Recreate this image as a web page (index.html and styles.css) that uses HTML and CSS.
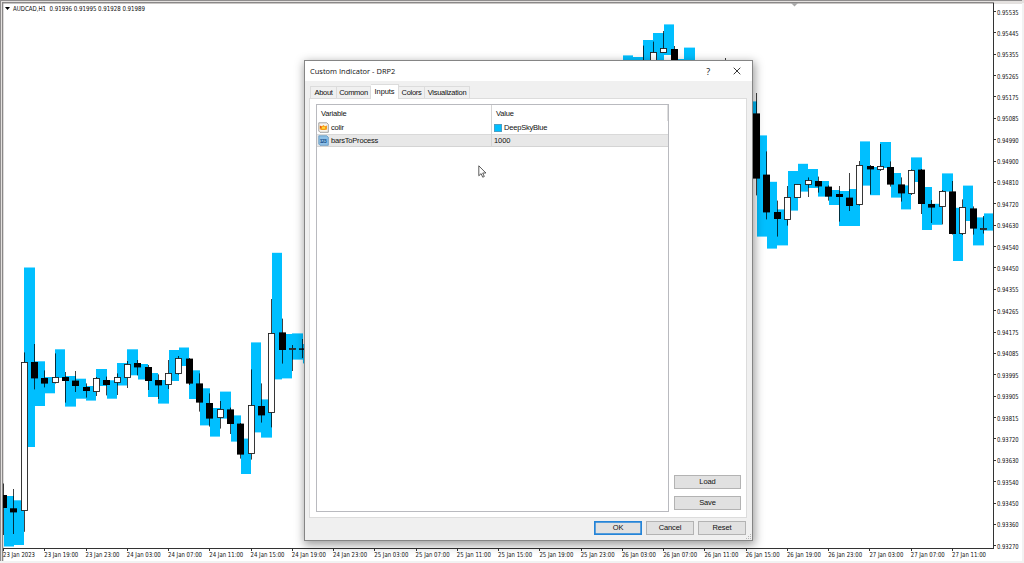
FILE: index.html
```html
<!DOCTYPE html>
<html lang="en">
<head>
<meta charset="utf-8">
<title>AUDCAD,H1</title>
<link rel="stylesheet" href="styles.css">
</head>
<body>
<main class="terminal">
  <svg class="chart" id="chart" width="1024" height="563" viewBox="0 0 1024 563">
    <g class="frame">
      <rect class="edge-light" x="0" y="0" width="1024" height="4"/>
      <rect class="edge-light" x="0" y="0" width="3" height="563"/>
      <rect class="edge-dark" x="0" y="0" width="1022" height="1"/>
      <rect class="edge-dark" x="0" y="0" width="1" height="561"/>
      <rect class="edge-mid" x="2" y="2" width="992" height="1.3"/>
      <rect class="edge-mid" x="2" y="2" width="1.3" height="559"/>
      <rect class="edge-pale" x="1022" y="3" width="2" height="560"/>
      <rect class="edge-pale" x="0" y="561" width="1024" height="2"/>
    </g>
    <path class="shift-mark" d="M791 3h7l-3.500 3.500z"/>
    <path class="menu-mark" d="M5 7h5l-2.500 3z"/>
    <text class="axis-text" x="13" y="10.500" textLength="132" lengthAdjust="spacingAndGlyphs" xml:space="preserve">AUDCAD,H1  0.91936 0.91995 0.91928 0.91989</text>
    <g id="bands" class="band"></g>
    <g id="candles"></g>
    <g id="axes">
      <path class="axis-line" d="M993.500 3V548.500M3 548.500H994"/>
    </g>
  </svg>

  <section class="dialog">
    <header class="titlebar">
      <h1 class="title">Custom Indicator - DRP2</h1>
      <span class="help">?</span>
      <svg class="close" width="8" height="8" viewBox="0 0 8 8"><path d="M.7.7l6.600 6.600M7.300.7L.7 7.300"/></svg>
    </header>
    <nav class="tabs">
      <span class="tab tab-about">About</span>
      <span class="tab tab-common">Common</span>
      <span class="tab tab-active">Inputs</span>
      <span class="tab tab-colors">Colors</span>
      <span class="tab tab-visual">Visualization</span>
    </nav>
    <div class="pane">
      <div class="list">
        <div class="row head"><span class="cell name">Variable</span><span class="cell value">Value</span></div>
        <div class="row">
          <span class="cell name">
            <svg class="icon" width="11" height="11" viewBox="0 0 11 11">
              <path d="M.8.8h8l1.500 1.500v8H2L.8 9z" fill="#f7f3ee" stroke="#8b8b8b" stroke-width=".8"/>
              <path d="M1.700 3.500L4 4.300 5.500 3l1.300 1.200L9 3.500v4L7 8H3.500l-1.800-.7z" fill="#f79a18"/>
              <path d="M4 4.800h3v2H4z" fill="#ffd83c"/><path d="M2 4h1.300v2H2z" fill="#e75b16"/>
            </svg>colir</span>
          <span class="cell value"><i class="swatch"></i>DeepSkyBlue</span>
        </div>
        <div class="row selected">
          <span class="cell name">
            <svg class="icon" width="11" height="11" viewBox="0 0 11 11">
              <path d="M.8.8h8l1.500 1.500v8H2L.8 9z" fill="#8fc1e8" stroke="#5e93bd" stroke-width=".8"/>
              <text class="icon-text" x="1.700" y="7.700" textLength="7">123</text>
            </svg>barsToProcess</span>
          <span class="cell value number">1000</span>
        </div>
      </div>
      <div class="side">
        <button class="btn btn-side">Load</button>
        <button class="btn btn-side">Save</button>
      </div>
    </div>
    <footer class="actions">
      <button class="btn btn-default">OK</button>
      <button class="btn">Cancel</button>
      <button class="btn">Reset</button>
    </footer>
    <svg class="grip" width="6" height="6" viewBox="0 0 6 6"><path d="M4 0h1v1H4zM2 2h1v1H2zM4 2h1v1H4zM0 4h1v1H0zM2 4h1v1H2zM4 4h1v1H4z"/></svg>
  </section>
  <svg class="cursor" width="10" height="14" viewBox="0 0 10 14"><path d="M.8.8v10l2.300-2.200 1.600 3.600 1.600-.7-1.600-3.500h3.200z"/></svg>
</main>
<script src="chart.js"></script>
</body>
</html>
```
FILE: styles.css
```css
body { margin: 0; background: #fff; font-family: "Liberation Sans", Arial, sans-serif; }
.terminal { position: relative; width: 1024px; height: 563px; overflow: hidden; }
.chart { display: block; }
.edge-light { fill: #e4e1df; }
.edge-dark { fill: #8f8d8d; }
.edge-mid { fill: #8a8888; }
.edge-pale { fill: #f2f2f2; }
.shift-mark { fill: #a9a9a9; }
.menu-mark { fill: #000; }
.band { fill: #00bfff; }
.up { fill: #fff; stroke: #222; stroke-width: .9; }
.down { fill: #000; }
.wick { stroke: #000; stroke-width: 1; stroke-opacity: .75; }
.axis-line { stroke: #333; stroke-width: 1; fill: none; }
.axis-text { font: 6.8px "DejaVu Sans Condensed", "DejaVu Sans", sans-serif; fill: #111; }

.dialog {
  position: absolute; left: 304px; top: 60px; width: 449px; height: 481px;
  box-sizing: border-box; border: 1px solid #858585; background: #f0f0f0;
  box-shadow: 1px 3px 9px 1px rgba(0, 0, 0, .38);
  display: flex; flex-direction: column;
  font-size: 7.5px; letter-spacing: -.2px; color: #111;
}
.titlebar { height: 20px; background: #fff; display: flex; align-items: center; flex: none; padding: 0 11px 0 5px; }
.title { margin: 0; font: 7.5px "Open Sans", "Noto Sans", sans-serif; letter-spacing: 0; white-space: nowrap; flex: 1; position: relative; top: -.5px; }
.help { font: 9px "Open Sans", sans-serif; margin-right: 23px; }
.close { fill: none; stroke: #222; stroke-width: .9; }
.tabs { display: flex; align-items: flex-end; height: 17px; padding-left: 5px; flex: none; }
.tab {
  box-sizing: border-box; height: 12px; line-height: 12px; text-align: center; white-space: nowrap;
  border: 1px solid #dcdcdc; border-bottom: 0; border-left-width: 0; letter-spacing: -.3px;
}
.tab-about { width: 27px; border-left-width: 1px; }
.tab-common { width: 34px; }
.tab-active { width: 28px; height: 15px; line-height: 13px; background: #fff; margin-bottom: -1px; position: relative; letter-spacing: -.1px; }
.tab-colors { width: 26px; }
.tab-visual { width: 45px; letter-spacing: -.25px; }
.pane { display: flex; box-sizing: border-box; height: 420px; margin: 0 5px 0 4px; background: #fff; border: 1px solid #dcdcdc; padding: 5px 5px 6px 7px; flex: none; }
.list { box-sizing: border-box; width: 353px; border: 1px solid #b9babf; height: 408px; margin-left: -1px; margin-right: 5px; flex: none; }
.row { display: flex; height: 13px; }
.head { height: 16px; }
.cell { display: flex; align-items: center; box-sizing: border-box; white-space: nowrap; }
.name { width: 175px; border-right: 1px solid #d4d4d4; padding-left: 1px; }
.value { flex: 1; padding-left: 2px; }
.number { letter-spacing: -.1px; }
.head .name, .head .value { padding-left: 4px; }
.head .value { border-right: 1px solid #dedede; }
.selected { background: #e8e8e8; box-shadow: inset 0 1px #d9d9d9, inset 0 -1px #d4d4d4; }
.icon { margin-right: 2px; flex: none; }
.icon-text { font: bold 5px "Liberation Sans", sans-serif; letter-spacing: 0; fill: #164e88; }
.swatch { width: 8px; height: 8px; background: #00bfff; border: .5px solid #4a9ec4; box-sizing: border-box; margin-right: 2px; }
.side { display: flex; flex-direction: column; justify-content: flex-end; gap: 7px; flex: 1; padding-bottom: 1px; }
.btn {
  box-sizing: border-box; width: 48px; height: 14px; padding: 0; border: 1px solid #b3b3b3; background: #e1e1e1;
  font: 7.5px "Liberation Sans", Arial, sans-serif; letter-spacing: -.1px; color: #111; line-height: 12px;
}
.btn-side { width: 67px; }
.btn-default { border: 1px solid #2484d8; box-shadow: inset 0 0 0 .7px #2484d8; }
.actions { display: flex; justify-content: flex-end; gap: 4px; padding: 3px 6px 0 0; }
.grip { position: absolute; right: 0; bottom: 0; fill: #b5b5b5; }
.cursor { position: absolute; left: 478px; top: 165px; fill: #fff; stroke: #333; stroke-width: .8; }
```
FILE: chart.js
```js
const NS = "http://www.w3.org/2000/svg";
const X0 = 3.6, STEP = 10.315;
const x = i => X0 + STEP * i;

// [index, top, bottom]: each band runs from its candle's centre to the next one
const bands = [
  [0,496,546.5],[1,500.3,545],[2,267.5,447],[3,361.3,406],[4,377,393.3],[5,349.3,378],[6,376,406.6],
  [7,378.7,398.7],[8,386,400.6],[9,369,386],[10,380.3,398.7],[11,363,385.5],[12,349.3,375.3],[13,364,379.5],
  [14,373,397],[15,380,403.6],[16,350,381],[17,347.5,366],[18,370.3,399],[19,388.3,425.4],[20,408,436.6],
  [21,391.6,418.6],[22,415.4,441.6],[23,438.6,474],[24,342.4,432.4],[25,399.4,437.6],[26,252.8,379.4],
  [27,334,378.4],[28,333.4,359.6],[29,344,363.4],
  [60,55.4,70],[61,57,70],[62,40,70],[63,33,70],[64,24.4,55],[65,59,70],[66,47.6,70],
  [72,101.4,162.4],[73,135.4,236.6],[74,181.8,248.6],[75,209.4,245.4],[76,171,210.6],[77,163.8,191.6],
  [78,169,188],[79,181,196.6],[80,190,205],[81,191,226],[82,189,226],[83,141.4,185.6],[84,167,195.2],
  [85,142,168],[86,173,197.6],[87,185.4,209.4],[88,157.4,182],[89,187,230],[90,203.8,224.8],[91,173.4,191.6],
  [92,207.8,261],[93,185.6,221],[94,217.4,245.4],[95,213.4,230.6]
];

// [index, rising, wick top, body top, body bottom, wick bottom]
const candles = [
  [0,0,483.5,495,508,535],[1,0,489,508.3,512.4,534],[2,1,352.4,362,511,531.8],[3,0,344,362,378.4,389.4],
  [4,0,370.4,378,383.6,387.4],[5,1,353.4,376.6,383,383.5],[6,0,372,377,381,402.6],[7,0,371,380.6,386,392],
  [8,0,383.4,387,391,397.6],[9,1,377,378,392,396],[10,0,376.6,380,385,395.4],[11,1,373.4,377.4,383.6,395],
  [12,1,361,364,378,388],[13,0,360,363,367.4,375.4],[14,0,365,367,381,390],[15,0,374.4,380,385.4,399],
  [16,1,360,373.4,385,389],[17,1,356,358,373.6,374.6],[18,0,358,358.6,383.6,385],[19,0,373.4,383.4,402.6,411.6],
  [20,0,393.4,403,418.6,426.6],[21,1,401,409,418,428.6],[22,0,407.6,409.4,424,434],[23,0,423,423.6,454.6,458.6],
  [24,1,369.4,405.4,454,459.6],[25,0,383.4,406,415.4,422.6],[26,1,299,333.4,413.6,427.4],[27,0,318.6,332.4,350,363.6],
  [28,1,345,348,350,371],[29,0,339,348.4,349.8,358],
  [62,1,45.6,60,70,70],[63,1,41.6,52,70,70],[64,1,31,48,53,53],[65,0,46,49,70,70],[70,0,58,65,70,70],
  [73,0,93,113.4,178.6,195.4],[74,0,151.4,174.6,212.4,219.4],[75,0,200.6,212,219,236.6],[76,1,186,197,219.6,225.6],
  [77,1,184,184,198,198],[78,1,177.4,180,185,197],[79,0,176.6,181,186.4,192.6],[80,0,185.4,186.6,196.6,200.6],
  [81,0,186,194,197,221.6],[82,0,173,197.6,206,211],[83,1,161,165.4,205.6,205.6],[84,0,165,166,169.4,194.4],
  [85,1,144,165.8,169.6,171],[86,0,161.4,167,184.6,186.6],[87,0,177.4,184.4,193.4,201.6],[88,1,169.4,170,193.6,195],
  [89,0,169,169.6,204,214],[90,0,200,204,207.6,223],[91,1,190,191,207,224.4],[92,0,181,191.4,234,234.6],
  [93,1,199.4,207.4,234.6,235],[94,0,206.4,208.4,228.6,234.6],[95,1,216,228,230,233.6]
];

const prices = ["0.95535","0.95445","0.95355","0.95265","0.95175","0.95085","0.94990","0.94900","0.94810",
  "0.94720","0.94630","0.94540","0.94450","0.94355","0.94265","0.94175","0.94085","0.93995","0.93905",
  "0.93815","0.93720","0.93630","0.93540","0.93450","0.93360","0.93270"];

const times = ["23 Jan 2023","23 Jan 19:00","23 Jan 23:00","24 Jan 03:00","24 Jan 07:00","24 Jan 11:00",
  "24 Jan 15:00","24 Jan 19:00","24 Jan 23:00","25 Jan 03:00","25 Jan 07:00","25 Jan 11:00","25 Jan 15:00",
  "25 Jan 19:00","25 Jan 23:00","26 Jan 03:00","26 Jan 07:00","26 Jan 11:00","26 Jan 15:00","26 Jan 19:00",
  "26 Jan 23:00","27 Jan 03:00","27 Jan 07:00","27 Jan 11:00"];

function add(parent, tag, attrs, text) {
  const el = document.createElementNS(NS, tag);
  for (const k in attrs) el.setAttribute(k, attrs[k]);
  if (text) el.textContent = text;
  parent.appendChild(el);
}

const bandLayer = document.getElementById("bands");
for (const [i, top, bottom] of bands) {
  const left = Math.round(x(i)), right = Math.min(993, Math.round(x(i + 1)));
  add(bandLayer, "rect", { x: left, y: top, width: right - left, height: bottom - top });
}

const candleLayer = document.getElementById("candles");
for (const [i, rising, high, top, bottom, low] of candles) {
  const c = Math.floor(x(i)) + 0.5;
  add(candleLayer, "path", { class: "wick", d: `M${c} ${high}V${low}` });
  if (rising) {
    add(candleLayer, "rect", { class: "up", x: c - 3, y: Math.round(top) + 0.5, width: 6, height: Math.max(1, Math.round(bottom - top) - 1) });
  } else {
    const left = Math.max(3, c - 3.5);
    add(candleLayer, "rect", { class: "down", x: left, y: top, width: c + 3.5 - left, height: bottom - top });
  }
}

const axes = document.getElementById("axes");
prices.forEach((p, n) => {
  const y = 12 + n * 21.37;
  add(axes, "path", { class: "axis-line", d: `M994 ${Math.round(y) - 0.5}h2` });
  add(axes, "text", { class: "axis-text", x: 997, y: y + 2.5, textLength: 21.7, lengthAdjust: "spacingAndGlyphs" }, p);
});
times.forEach((t, n) => {
  const tx = 3 + n * 41.26;
  add(axes, "path", { class: "axis-line", d: `M${Math.floor(tx + 0.5) + 0.5} 549v2` });
  add(axes, "text", { class: "axis-text", x: tx, y: 556.9, textLength: n ? 34 : 32, lengthAdjust: "spacingAndGlyphs" }, t);
});
```
